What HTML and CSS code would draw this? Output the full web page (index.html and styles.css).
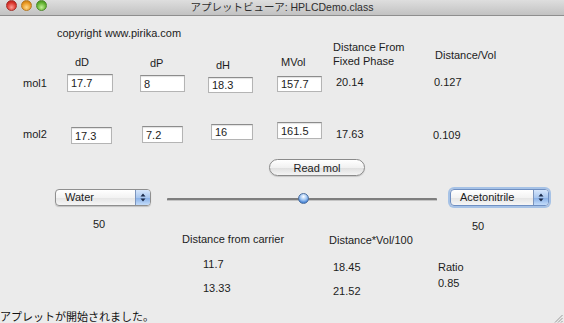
FILE: index.html
```html
<!DOCTYPE html>
<html lang="ja">
<head>
  <meta charset="UTF-8">
  <meta name="viewport" content="width=device-width, initial-scale=1.0">
  <title>HPLCDemo</title>
  <link rel="stylesheet" href="styles.css">
</head>
<body>
  <div class="window">

    <div class="titlebar">
      <div class="lights">
        <span class="light red"></span>
        <span class="light yellow"></span>
        <span class="light green"></span>
      </div>
      <p class="title">アプレットビューア: HPLCDemo.class</p>
    </div>

    <div class="applet">
      <p class="label copyright">copyright www.pirika.com</p>

      <p class="label head-dd">dD</p>
      <p class="label head-dp">dP</p>
      <p class="label head-dh">dH</p>
      <p class="label head-mvol">MVol</p>
      <p class="label head-fixed">Distance From<br>Fixed Phase</p>
      <p class="label head-dvol">Distance/Vol</p>

      <p class="label mol1">mol1</p>
      <input class="field f1-dd" type="text" value="17.7">
      <input class="field f1-dp" type="text" value="8">
      <input class="field f1-dh" type="text" value="18.3">
      <input class="field f1-mvol" type="text" value="157.7">
      <p class="label v1-dist">20.14</p>
      <p class="label v1-dvol">0.127</p>

      <p class="label mol2">mol2</p>
      <input class="field f2-dd" type="text" value="17.3">
      <input class="field f2-dp" type="text" value="7.2">
      <input class="field f2-dh" type="text" value="16">
      <input class="field f2-mvol" type="text" value="161.5">
      <p class="label v2-dist">17.63</p>
      <p class="label v2-dvol">0.109</p>

      <button class="read-button">Read mol</button>

      <div class="popup popup-left">
        <span class="popup-text">Water</span>
        <span class="popup-arrows">
          <svg width="6" height="9" viewBox="0 0 6 9"><path d="M3 0.5 L5.5 3.5 L0.5 3.5 Z M3 8.5 L5.5 5.5 L0.5 5.5 Z" fill="#1b2b4a"/></svg>
        </span>
      </div>

      <div class="slider">
        <div class="slider-track"></div>
        <div class="slider-thumb"></div>
      </div>

      <div class="popup popup-right">
        <span class="popup-text">Acetonitrile</span>
        <span class="popup-arrows">
          <svg width="6" height="9" viewBox="0 0 6 9"><path d="M3 0.5 L5.5 3.5 L0.5 3.5 Z M3 8.5 L5.5 5.5 L0.5 5.5 Z" fill="#1b2b4a"/></svg>
        </span>
      </div>

      <p class="label pct-left">50</p>
      <p class="label pct-right">50</p>

      <p class="label head-carrier">Distance from carrier</p>
      <p class="label head-dvol100">Distance*Vol/100</p>

      <p class="label c1">11.7</p>
      <p class="label d1">18.45</p>
      <p class="label ratio-head">Ratio</p>
      <p class="label c2">13.33</p>
      <p class="label d2">21.52</p>
      <p class="label ratio">0.85</p>
    </div>

    <div class="statusbar">
      <p class="status">アプレットが開始されました。</p>
      <svg class="grip" width="9" height="9" viewBox="0 0 9 9">
        <path d="M8.5 1 L1 8.5 M8.5 4 L4 8.5 M8.5 7 L7 8.5" stroke="#9a9a9a" stroke-width="1"/>
      </svg>
    </div>

  </div>
</body>
</html>
```

FILE: styles.css
```css
body {
  margin: 0;
  background-color: #ebebeb;
  font-family: "Liberation Sans", Arial, sans-serif;
  font-size: 11px;
  color: #1c1c1c;
}

p {
  margin: 0;
}

.window {
  width: 564px;
  height: 323px;
  display: flex;
  flex-direction: column;
  overflow: hidden;
}

/* title bar */

.titlebar {
  height: 15px;
  flex: none;
  position: relative;
  display: flex;
  align-items: center;
  justify-content: center;
  background: linear-gradient(#dedede, #c2c2c2);
  border-bottom: 1px solid #8e8e8e;
}

.lights {
  position: absolute;
  left: 6px;
  top: 0;
  display: flex;
  gap: 4px;
}

.light {
  width: 11px;
  height: 11px;
  border-radius: 50%;
  box-sizing: border-box;
}

.red {
  background: radial-gradient(circle at 50% 70%, #ff9c94, #d8322b 60%, #a91b16);
  border: 1px solid #a5302a;
}

.yellow {
  background: radial-gradient(circle at 50% 70%, #ffd98a, #e8961f 60%, #b06a10);
  border: 1px solid #b57a24;
}

.green {
  background: radial-gradient(circle at 50% 70%, #c2f095, #5fb02f 60%, #3d7f1a);
  border: 1px solid #4e8a2c;
}

.title {
  font-family: "Liberation Sans", "Noto Sans CJK JP", sans-serif;
  font-size: 10.5px;
  color: #2e2e2e;
  line-height: 15px;
}

/* applet panel, null layout: components sit at fixed places */

.applet {
  flex: 1;
  position: relative;
}

.label {
  position: absolute;
  line-height: 13px;
  white-space: nowrap;
}

.copyright { left: 57px; top: 11px; }

.head-dd { left: 75px; top: 40px; }
.head-dp { left: 150px; top: 41px; }
.head-dh { left: 216px; top: 43px; }
.head-mvol { left: 281px; top: 40px; }
.head-fixed { left: 333px; top: 24px; line-height: 14px; }
.head-dvol { left: 435px; top: 33px; }

.mol1 { left: 23px; top: 61px; }
.v1-dist { left: 336px; top: 60px; }
.v1-dvol { left: 434px; top: 60px; }

.mol2 { left: 23px; top: 112px; }
.v2-dist { left: 336px; top: 112px; }
.v2-dvol { left: 433px; top: 113px; }

.field {
  position: absolute;
  box-sizing: border-box;
  height: 17px;
  padding: 0 3px;
  margin: 0;
  border: 1px solid #b4b4b4;
  border-top-color: #8c8c8c;
  background-color: white;
  box-shadow: inset 0 1px 1px rgba(0, 0, 0, 0.12);
  font-family: "Liberation Sans", Arial, sans-serif;
  font-size: 11px;
  color: #1c1c1c;
  outline: none;
}

.f1-dd { left: 67px; top: 58px; width: 46px; height: 18px; }
.f1-dp { left: 140px; top: 59px; width: 45px; }
.f1-dh { left: 208px; top: 61px; width: 45px; height: 16px; }
.f1-mvol { left: 277px; top: 60px; width: 45px; height: 16px; }

.f2-dd { left: 71px; top: 111px; width: 41px; }
.f2-dp { left: 142px; top: 110px; width: 41px; }
.f2-dh { left: 211px; top: 108px; width: 42px; height: 16px; }
.f2-mvol { left: 277px; top: 106px; width: 45px; }

.read-button {
  position: absolute;
  left: 269px;
  top: 143px;
  width: 96px;
  height: 17px;
  padding: 0;
  border: 1px solid #8a8a8a;
  border-radius: 9px;
  background: linear-gradient(#ffffff, #f1f1f1 50%, #dedede 51%, #f4f4f4);
  font-family: "Liberation Sans", Arial, sans-serif;
  font-size: 11px;
  color: #1c1c1c;
  box-shadow: 0 1px 1px rgba(0, 0, 0, 0.15);
}

.popup {
  position: absolute;
  top: 173px;
  height: 17px;
  box-sizing: border-box;
  display: flex;
  align-items: center;
  border: 1px solid #8f8f8f;
  border-radius: 4px;
  background: linear-gradient(#ffffff, #f3f3f3 50%, #e4e4e4 51%, #f6f6f6);
  box-shadow: 0 1px 1px rgba(0, 0, 0, 0.18);
  overflow: hidden;
}

.popup-left {
  left: 55px;
  width: 96px;
}

.popup-right {
  left: 450px;
  width: 99px;
  border-color: #6f8fc2;
  box-shadow: 0 0 0 2px rgba(110, 160, 225, 0.55);
}

.popup-text {
  flex: 1;
  padding-left: 9px;
  line-height: 15px;
}

.popup-arrows {
  width: 14px;
  height: 15px;
  display: flex;
  align-items: center;
  justify-content: center;
  border-left: 1px solid #7c95bd;
  background: linear-gradient(#d6e6fb, #a9c7ef 50%, #86aee6 51%, #c3dcfa);
}

.slider {
  position: absolute;
  left: 167px;
  top: 177px;
  width: 270px;
  height: 12px;
}

.slider-track {
  margin-top: 5px;
  height: 2px;
  border-radius: 1px;
  background-color: #7e7e7e;
  border-bottom: 1px solid #c4c4c4;
}

.slider-thumb {
  position: absolute;
  left: 131px;
  top: 0;
  width: 11px;
  height: 11px;
  box-sizing: border-box;
  border-radius: 50%;
  border: 1px solid #4d6f9e;
  background: radial-gradient(circle at 50% 30%, #ffffff, #9cc3f2 45%, #3d7bd0 80%);
}

.pct-left { left: 93px; top: 202px; }
.pct-right { left: 472px; top: 204px; }

.head-carrier { left: 182px; top: 217px; }
.head-dvol100 { left: 329px; top: 218px; }

.c1 { left: 203px; top: 242px; }
.d1 { left: 333px; top: 245px; }
.ratio-head { left: 438px; top: 245px; }
.c2 { left: 203px; top: 266px; }
.d2 { left: 333px; top: 269px; }
.ratio { left: 438px; top: 261px; }

/* status line */

.statusbar {
  height: 14px;
  flex: none;
  display: flex;
  align-items: center;
  justify-content: space-between;
}

.status {
  font-family: "Noto Sans CJK JP", sans-serif;
  font-size: 11px;
  line-height: 14px;
  color: #111;
}

.grip {
  margin-right: 1px;
  align-self: flex-end;
}
```
